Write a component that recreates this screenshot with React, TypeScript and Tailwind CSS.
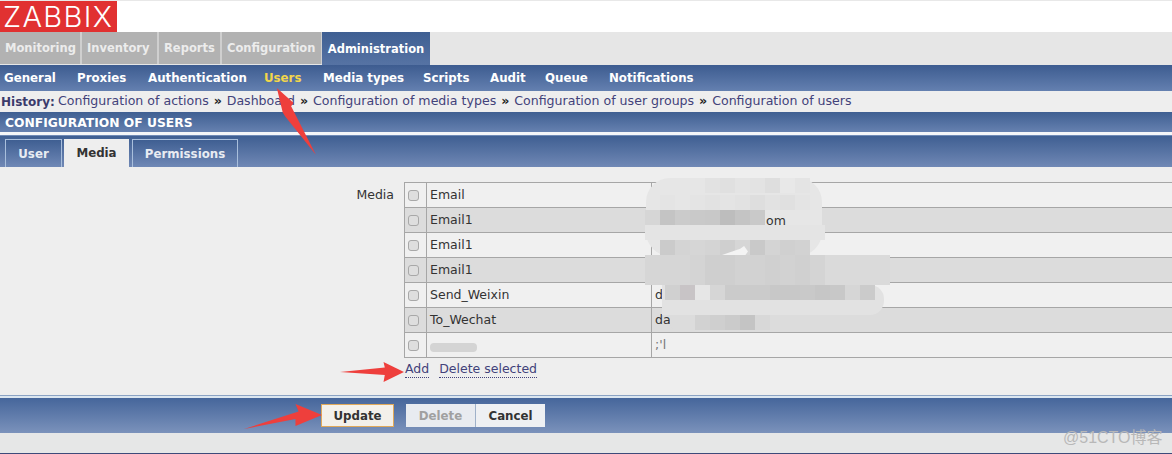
const FONT = { fontFamily: '"DejaVu Sans", Verdana, sans-serif' };

const topTabs = [
  { label: "Monitoring", w: "w-[82px]" },
  { label: "Inventory", w: "w-[77px]" },
  { label: "Reports", w: "w-[63px]" },
  { label: "Configuration", w: "w-[101px]" },
];
const subNav = [
  { label: "General", w: "w-[73px]" },
  { label: "Proxies", w: "w-[71px]" },
  { label: "Authentication", w: "w-[116px]" },
  { label: "Users", w: "w-[59px]" },
  { label: "Media types", w: "w-[100px]" },
  { label: "Scripts", w: "w-[67px]" },
  { label: "Audit", w: "w-[55px]" },
  { label: "Queue", w: "w-[64px]" },
  { label: "Notifications", w: "w-[90px]" },
];
const history = ["Configuration of actions", "Dashboard", "Configuration of media types", "Configuration of user groups", "Configuration of users"];
const media = [
  ["Email", ""],
  ["Email1", ""],
  ["Email1", ""],
  ["Email1", ""],
  ["Send_Weixin", "d"],
  ["To_Wechat", "da"],
  ["", ""],
];

// mosaic rows over the blurred-out addresses: [left, top, tile colours]
const mosaic: [number, number, string[]][] = [
  [705, 178, ["#e2e2e2", "#e0e0e0", "#e4e4e4", "#e3e3e3", "#dedede", "#e8e8e8", "#e4e4e4"]],
  [660, 195, ["#e4e4e4", "#e6e6e6", "#e4e4e4", "#e2e2e2", "#e4e4e4", "#e2e2e2", "#dedede", "#e2e2e2", "#e0e0e0", "#e4e4e4"]],
  [645, 210, ["#d6d6d6", "#c4c4c4", "#cbcbcb", "#c9c9c9", "#c8c8c8", "#bdbdbd", "#c4c4c4", "#c9c9c9"]],
  [660, 240, ["#cbcbcb", "#d4d4d4", "#d6d6d6", "#d4d4d4", "#cfcfcf", "#d6d6d6", "#c9c9c9", "#d4d4d4", "#d0d0d0", "#d2d2d2"]],
  [645, 255, ["#d6d6d6", "#d6d6d6", "#d6d6d6", "#d4d4d4", "#cfcfcf", "#cfcfcf", "#d2d2d2", "#d2d2d2", "#d0d0d0", "#d2d2d2", "#d0d0d0", "#d4d4d4"]],
  [645, 270, ["#d6d6d6", "#d6d6d6", "#d6d6d6", "#d4d4d4", "#cfcfcf", "#cfcfcf", "#d2d2d2", "#d2d2d2", "#d0d0d0", "#d2d2d2", "#d0d0d0", "#d4d4d4"]],
  [665, 285, ["#d0d0d0", "#c8c4c6", "#e6e6e6", "#d6d6d6", "#cbcbcb", "#cbcbcb", "#cbcbcb", "#c8c8c8", "#c8c8c8", "#c9c9c9", "#c6c6c6", "#c8c8c8", "#d6d6d6", "#cbcbcb"]],
  [680, 315, ["#dcdcdc", "#d2d2d2", "#cfcfcf", "#cbcbcb", "#c4c4c4", "#d8d8d8"]],
];

function Arrow({ className, points, fill = "#ee3f3c" }: { className: string; points: string; fill?: string }) {
  return (
    <svg className={`absolute ${className}`} viewBox="0 0 100 100" preserveAspectRatio="none">
      <polygon points={points} fill={fill} />
    </svg>
  );
}

function Blur({ className }: { className: string }) {
  return <div className={`absolute ${className}`} />;
}

export default function App() {
  return (
    <div className="relative w-[1172px] h-[454px] overflow-hidden bg-[#ececec] text-[#333]" style={FONT}>
      <div className="h-px bg-[#e8e8e8]" />
      <div className="h-[31px] bg-white">
        <div className="w-[117px] h-[31px] bg-[#e13131] text-white text-[29px] font-light leading-[31px] pl-[3px] tracking-[1.4px] whitespace-nowrap" style={{ fontFamily: 'Inter, "Liberation Sans", sans-serif' }}>
          ZABBIX
        </div>
      </div>

      <div className="flex h-[33px] bg-[#e6e6e6] text-[11.5px] font-bold">
        {topTabs.map((t) => (
          <div key={t.label} className={`${t.w} h-[32px] pl-[5px] pt-[2px] flex items-center bg-[#b2b2b2] text-[#ececec] border-r-2 border-[#cfcfcf]`}>{t.label}</div>
        ))}
        <div className="h-[33px] w-[108px] pt-[2px] flex items-center justify-center -ml-px bg-gradient-to-b from-[#3f5f92] to-[#5673a4] text-white">Administration</div>
      </div>

      <div className="flex h-[26px] items-center pl-[4px] pt-[2px] bg-gradient-to-b from-[#3d5c90] to-[#6480b0] text-[11.8px] font-bold text-white">
        {subNav.map((s) => (
          <span key={s.label} className={`${s.w} ${s.label === "Users" ? "text-[#f2d64b]" : ""}`}>{s.label}</span>
        ))}
      </div>

      <div className="flex h-[21px] items-center pl-[1px] bg-[#eeeeee] text-[12.58px] text-[#42427a] whitespace-pre">
        <span className="font-bold text-[12px] w-[57px] text-[#3b3b6b]">History:</span>
        {history.map((h, i) => (
          <span key={h} className="flex items-center">
            {h}
            {i < history.length - 1 && <b className="inline-block w-[18px] text-center text-[#222]">»</b>}
          </span>
        ))}
      </div>

      <div className="h-[20px] flex items-center pl-[5px] pt-[2px] bg-gradient-to-b from-[#3f5f92] to-[#6681b0] text-[12.3px] font-bold text-white">
        CONFIGURATION OF USERS
      </div>
      <div className="h-[3px] bg-[#f4f6f8]" />

      <div className="flex h-[32px] items-end pl-[5px] border-t border-[#6f8ab5] bg-gradient-to-b from-[#3f5f92] to-[#7088b5] text-[11.8px] font-bold">
        <div className="w-[57px] h-[28px] pt-[2px] flex items-center justify-center border border-b-0 border-[#a9bfdc] bg-gradient-to-b from-[#3f5f92] to-[#6f88b6] text-[#e8ecf2]">User</div>
        <div className="w-[65px] ml-[2px] h-[28px] pt-[2px] flex items-center justify-center bg-[#eeeeee] text-[#333]">Media</div>
        <div className="w-[106px] ml-[3px] h-[28px] pt-[2px] flex items-center justify-center border border-b-0 border-[#a9bfdc] bg-gradient-to-b from-[#3f5f92] to-[#6f88b6] text-[#e8ecf2]">Permissions</div>
      </div>

      <div className="flex h-[228px] pt-[15px] bg-[#eeeeee] text-[12.5px]">
        <div className="w-[394px] pt-[4px] text-right text-[#333]">Media</div>
        <div className="ml-[10px] flex-1">
          <div className="border-t border-l border-[#a6a6a6]">
            {media.map((row, i) => (
              <div key={i} className={`flex h-[25px] border-b border-[#a6a6a6] ${i % 2 ? "bg-[#dcdcdc]" : "bg-[#f0f0f0]"}`}>
                <div className="w-[22px] shrink-0 border-r border-[#a6a6a6] flex items-center pl-[3px]">
                  <div className="w-[11px] h-[11px] rounded-[3px] border border-[#a8a8a8] bg-[#dedede]" />
                </div>
                <div className="w-[225px] shrink-0 border-r border-[#a6a6a6] pl-[3px] flex items-center">{row[0]}</div>
                <div className="pl-[3px] flex items-center">{row[1]}</div>
              </div>
            ))}
          </div>
          <div className="flex gap-[10px] mt-[3px] pl-px text-[#42427a]">
            <span className="border-b border-dotted border-[#42427a] leading-[16px]">Add</span>
            <span className="border-b border-dotted border-[#42427a] leading-[16px]">Delete selected</span>
          </div>
        </div>
      </div>

      <div className="h-px bg-[#8ba3c4]" />
      <div className="h-[2px] bg-[#dbe6f0]" />
      <div className="flex h-[35px] items-center pl-[321px] bg-gradient-to-b from-[#46669b] to-[#7b92bb] text-[11.8px] font-bold">
        <div className="w-[73px] h-[23px] pt-[2px] flex items-center justify-center bg-[#f3f0ea] border border-[#e0a95a] text-[#333]">Update</div>
        <div className="w-[70px] h-[23px] pt-[2px] ml-[12px] flex items-center justify-center bg-[#e8ebf0] text-[#a0a0a0] border-r border-[#9fb1c9]">Delete</div>
        <div className="w-[69px] h-[23px] pt-[2px] flex items-center justify-center bg-[#eef0f3] text-[#333]">Cancel</div>
      </div>
      <div className="h-[20px] bg-[#e6e7e7]" />
      <div className="h-px bg-[#3c4a7a]" />

      {/* privacy smudges */}
      <Blur className="left-[646px] top-[178px] w-[176px] h-[78px] rounded-[24px] bg-[#e6e6e6]" />
      <Blur className="left-[645px] top-[225px] w-[180px] h-[15px] bg-[#e4e4e4]" />
      <Blur className="left-[645px] top-[255px] w-[245px] h-[30px] rounded-l-[10px] bg-[#dadada]" />
      <Blur className="left-[662px] top-[285px] w-[222px] h-[30px] rounded-r-[14px] bg-[#e2e2e2]" />
      <Blur className="left-[670px] top-[315px] w-[95px] h-[15px] rounded-b-[6px] bg-[#dcdcdc]" />
      {mosaic.map(([x, y, tiles]) => (
        <div key={`${x}-${y}`} className="absolute flex h-[15px]" style={{ left: x, top: y }}>
          {tiles.map((c, i) => (
            <div key={i} className="w-[15px] h-[15px]" style={{ backgroundColor: c }} />
          ))}
        </div>
      ))}
      <Arrow className="left-[722px] top-[246px] w-[26px] h-[9px]" points="0,100 70,30 85,0 100,60 90,100" fill="#f4f4f4" />
      <Blur className="left-[430px] top-[343px] w-[47px] h-[9px] rounded-[4px] bg-[#d4d4d4]" />
      <span className="absolute left-[766px] top-[212px] text-[12.5px] text-[#333]">om</span>
      <span className="absolute left-[655px] top-[336px] text-[12.5px] text-[#777]">;'l</span>

      {/* annotation arrows */}
      <Arrow className="left-[276px] top-[88px] w-[42px] h-[68px]" points="2,0 42,22 36,27 95,98 22,42 16,36" />
      <Arrow className="left-[340px] top-[362px] w-[64px] h-[20px]" points="0,50 70,28 68,0 100,50 68,100 70,65" />
      <Arrow className="left-[244px] top-[404px] w-[78px] h-[25px]" points="0,100 70,30 66,0 100,44 66,88 66,60" />

      <span className="absolute left-[1063px] top-[426px] text-[16px] text-[#b8b8b8]" style={{ fontFamily: '"Liberation Sans", "Noto Sans CJK SC", sans-serif' }}>
        @51CTO博客
      </span>
    </div>
  );
}
